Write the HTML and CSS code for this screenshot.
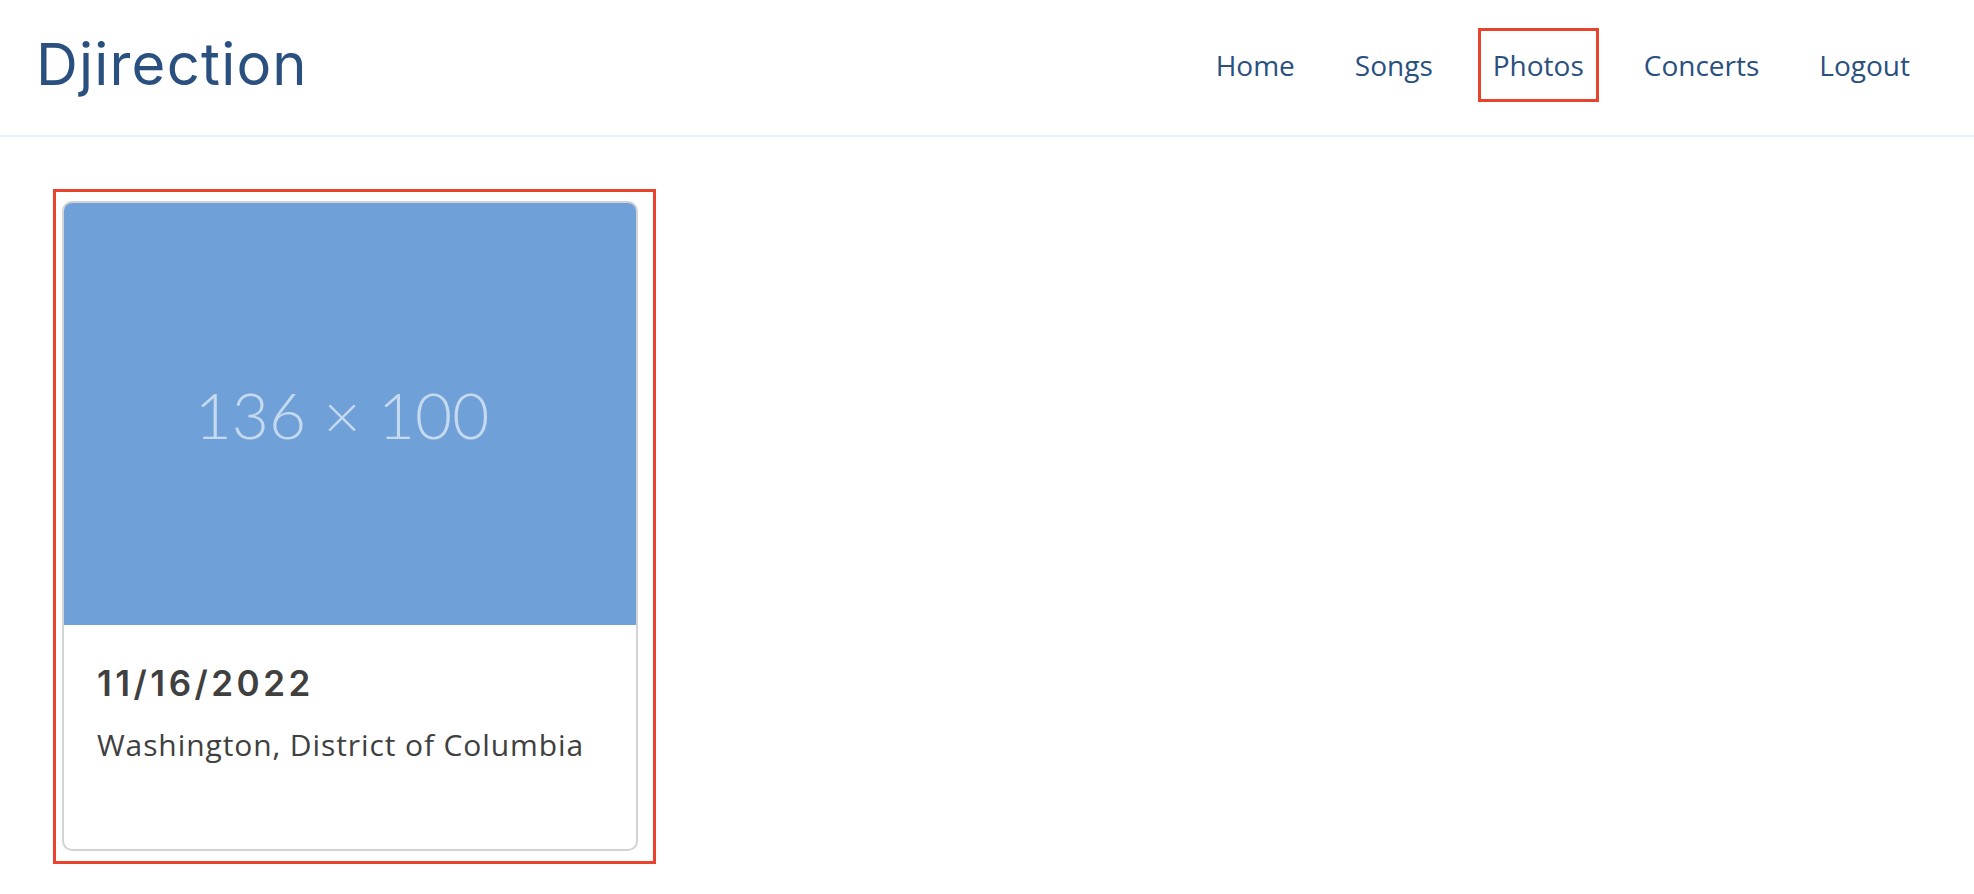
FILE: index.html
```html
<!DOCTYPE html>
<html lang="en">
<head>
<meta charset="utf-8">
<title>Djirection</title>
<link rel="stylesheet" href="styles.css">
</head>
<body>
<header class="site-header">
  <a class="brand" href="#">Djirection</a>
  <nav class="main-nav">
    <a class="nav-link" href="#">Home</a>
    <a class="nav-link" href="#">Songs</a>
    <a class="nav-link active" href="#">Photos</a>
    <a class="nav-link" href="#">Concerts</a>
    <a class="nav-link" href="#">Logout</a>
  </nav>
</header>
<main class="content">
  <div class="highlight">
    <article class="photo-card">
      <div class="photo-placeholder"><span>136 × 100</span></div>
      <div class="photo-body">
        <h2 class="photo-date">11/16/2022</h2>
        <p class="photo-place">Washington, District of Columbia</p>
      </div>
    </article>
  </div>
</main>
</body>
</html>
```
FILE: styles.css
```css
* { box-sizing: border-box; }
html, body { margin: 0; padding: 0; background: #ffffff; }
body { font-family: "Open Sans", "Noto Sans", sans-serif; }

.site-header {
  display: flex;
  justify-content: space-between;
  align-items: flex-start;
  height: 137px;
  padding: 28px 49px 0 36px;
  border-bottom: 2px solid #e5f0fa;
}

.brand {
  font-family: Inter, "Noto Sans", sans-serif;
  font-weight: 400;
  font-size: 58px;
  line-height: 70px;
  letter-spacing: 1.2px;
  margin-top: 1px;
  color: #2a5080;
  text-decoration: none;
}

.main-nav {
  display: flex;
  gap: 30px;
}

.nav-link {
  display: block;
  font-family: "Open Sans", sans-serif;
  font-size: 28px;
  line-height: 38px;
  padding: 15px 12px;
  border: 3px solid transparent;
  color: #2a5080;
  text-decoration: none;
}

.nav-link.active { border-color: #e8432c; }

.content {
  padding: 52px 0 0 53px;
}

.highlight {
  display: inline-block;
  border: 3px solid #e8432c;
  padding: 9px 15px 10px 6px;
}

.photo-card {
  width: 576px;
  height: 650px;
  border: 2px solid #d3d3d3;
  border-radius: 10px;
  overflow: hidden;
  background: #fff;
}

.photo-placeholder {
  height: 422px;
  background: #6fa0d7;
  display: flex;
  align-items: center;
  justify-content: center;
}

.photo-placeholder span {
  font-family: Lato, "Liberation Sans", sans-serif;
  font-weight: 300;
  font-size: 64px;
  color: rgba(255, 255, 255, 0.6);
  margin-left: -16px;
}

.photo-body {
  padding: 38px 33px 0 33px;
}

.photo-date {
  margin: 0;
  font-family: Inter, "Noto Sans", sans-serif;
  font-weight: 600;
  font-size: 35px;
  line-height: 40px;
  letter-spacing: 3.5px;
  color: #404040;
}

.photo-place {
  margin: 22px 0 0 0;
  font-family: "Open Sans", sans-serif;
  font-size: 30px;
  line-height: 40px;
  letter-spacing: 0.9px;
  color: #404040;
}
```
